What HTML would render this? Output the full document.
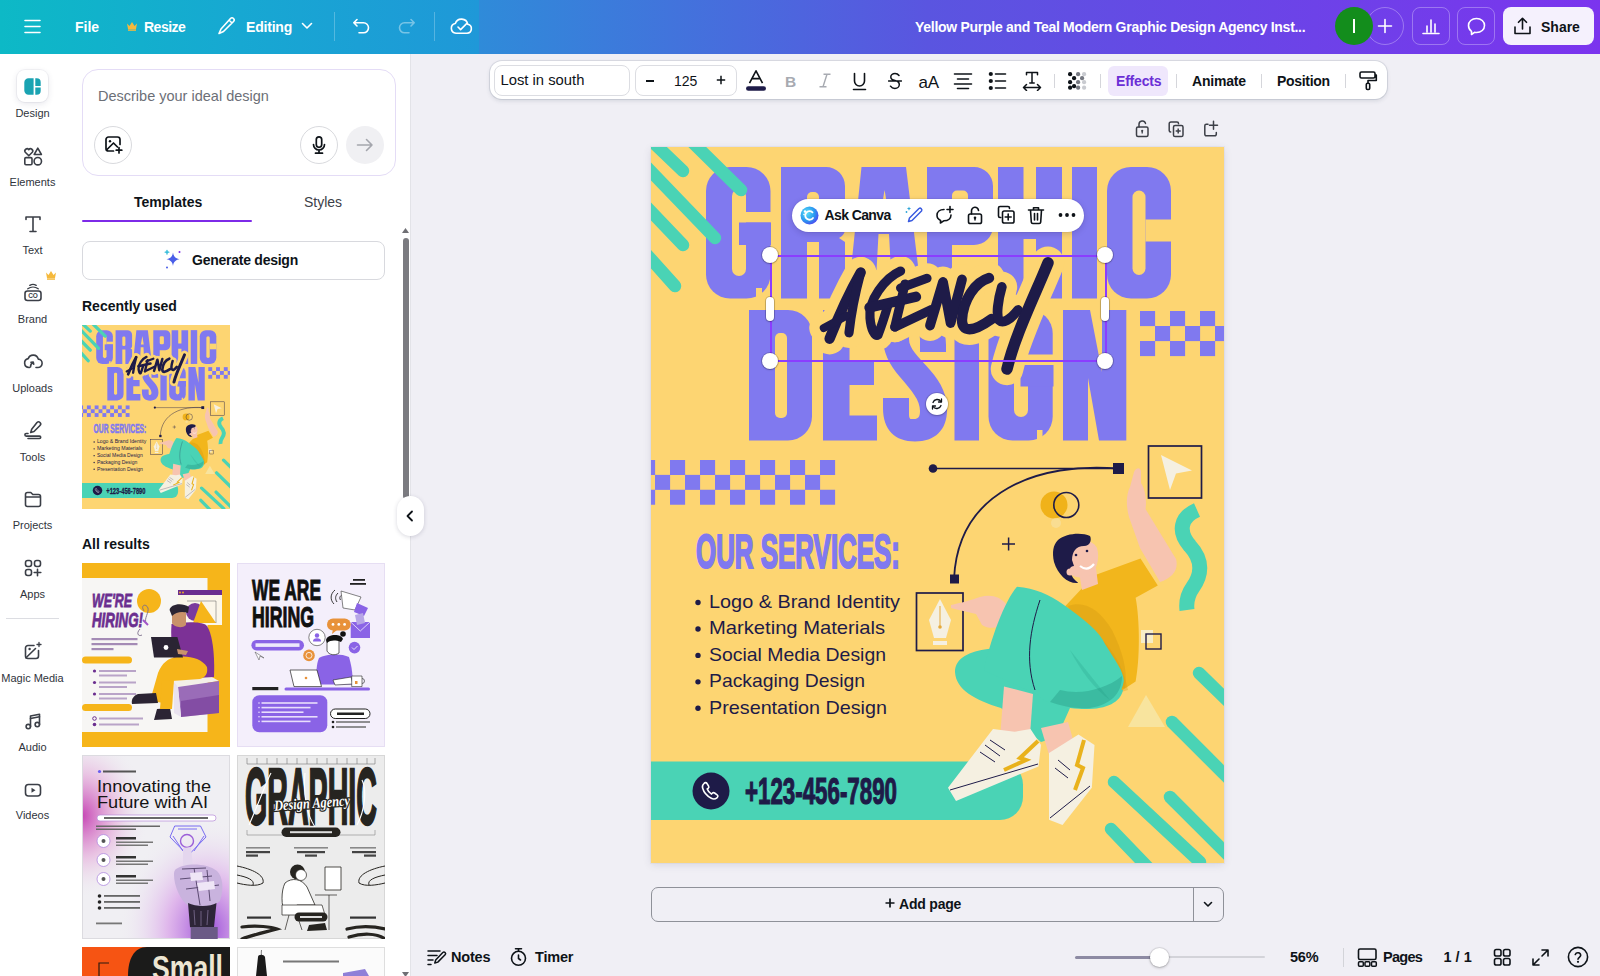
<!DOCTYPE html>
<html><head><meta charset="utf-8">
<style>
*{box-sizing:border-box;margin:0;padding:0}
html,body{width:1600px;height:976px;overflow:hidden;background:#f0eff5;font-family:"Liberation Sans",sans-serif;color:#0e1318}
.a{position:absolute}
.t{position:absolute;line-height:1;white-space:nowrap}
#top{left:0;top:0;width:479px;height:54px;background:linear-gradient(90deg,#0db9c6 0%,#17a8d2 50%,#1f98d8 100%)}
#top2{left:479px;top:0;width:1121px;height:54px;background:linear-gradient(90deg,#2f8bd9 0%,#5a55e0 40%,#7b34ee 100%)}
.wt{color:#fff;font-weight:bold;font-size:14px}
#rail{left:0;top:54px;width:65px;height:922px;background:#fff}
#panel{left:65px;top:54px;width:346px;height:922px;background:#fff;border-right:1px solid #e3e3e8}
.lbl{position:absolute;width:65px;left:0;margin-top:0.6px;text-align:center;font-size:11px;line-height:1;color:#30343c}
.ic{position:absolute;left:22px;width:21px;height:21px}
.thumb{position:absolute;width:148px;height:184px;overflow:hidden}
</style></head><body>
<div id="top" class="a"></div>
<div id="top2" class="a"></div>

<!-- top bar content -->
<svg class="a" style="left:24px;top:19px" width="17" height="15" viewBox="0 0 17 15"><path d="M1 1.5h15M1 7.5h15M1 13.5h15" stroke="#fff" stroke-width="1.6" stroke-linecap="round"/></svg>
<div class="t wt" style="left:75px;top:20px">File</div>
<svg class="a" style="left:126px;top:21px" width="12" height="10" viewBox="0 0 12 10"><path d="M1 2.5l2.5 2.5L6 1l2.5 4L11 2.5 10 8H2z" fill="#f5b93c"/><rect x="2" y="8.3" width="8" height="1.5" fill="#f5b93c"/></svg>
<div class="t wt" style="left:144px;top:20px;letter-spacing:-0.5px">Resize</div>
<svg class="a" style="left:217px;top:16px" width="20" height="20" viewBox="0 0 20 20"><path d="M13.5 2.5a2.1 2.1 0 0 1 3 3L6.5 15.5 2 17.5l2-4.5z M12 4l3 3" fill="none" stroke="#fff" stroke-width="1.6" stroke-linejoin="round"/></svg>
<div class="t wt" style="left:246px;top:20px;letter-spacing:-0.2px">Editing</div>
<svg class="a" style="left:301px;top:22px" width="12" height="8" viewBox="0 0 12 8"><path d="M1.5 1.5l4.5 4.5 4.5-4.5" fill="none" stroke="#fff" stroke-width="1.6" stroke-linecap="round" stroke-linejoin="round"/></svg>
<div class="a" style="left:334px;top:12px;width:1px;height:29px;background:rgba(255,255,255,.25)"></div>
<svg class="a" style="left:352px;top:17px" width="20" height="18" viewBox="0 0 20 18"><path d="M5 2.5L1.8 5.8 5 9M2 5.8h9.5a5 5 0 0 1 0 10H7" fill="none" stroke="#fff" stroke-width="1.6" stroke-linecap="round" stroke-linejoin="round"/></svg>
<svg class="a" style="left:396px;top:17px" width="20" height="18" viewBox="0 0 20 18"><path d="M15 2.5l3.2 3.3L15 9M18 5.8H8.5a5 5 0 0 0 0 10H13" fill="none" stroke="rgba(255,255,255,.4)" stroke-width="1.6" stroke-linecap="round" stroke-linejoin="round"/></svg>
<div class="a" style="left:434px;top:12px;width:1px;height:29px;background:rgba(255,255,255,.25)"></div>
<svg class="a" style="left:450px;top:16px" width="23" height="19" viewBox="0 0 23 19"><path d="M6 17.2h11a4.5 4.5 0 0 0 .8-8.9A6.5 6.5 0 0 0 5.3 7.5 4.9 4.9 0 0 0 6 17.2z" fill="none" stroke="#fff" stroke-width="1.6" stroke-linejoin="round"/><path d="M8 11l2.6 2.6 6-6" fill="none" stroke="#fff" stroke-width="1.6" stroke-linecap="round" stroke-linejoin="round"/></svg>
<div class="t wt" style="left:915px;top:20px;font-size:14px;letter-spacing:-0.28px">Yellow Purple and Teal Modern Graphic Design Agency Inst...</div>
<div class="a" style="left:1366px;top:7px;width:38px;height:38px;border-radius:50%;border:1px solid rgba(255,255,255,.3)"></div>
<svg class="a" style="left:1377px;top:18px" width="16" height="16" viewBox="0 0 16 16"><path d="M8 1.5v13M1.5 8h13" stroke="#fff" stroke-width="1.6" stroke-linecap="round"/></svg>
<div class="a" style="left:1335px;top:7px;width:38px;height:38px;border-radius:50%;background:#138d1c"></div>
<div class="a" style="left:1353px;top:19px;width:2px;height:14px;background:#fff"></div>
<div class="a" style="left:1412px;top:7px;width:38px;height:38px;border-radius:8px;border:1px solid rgba(255,255,255,.3)"></div>
<svg class="a" style="left:1421px;top:16px" width="20" height="20" viewBox="0 0 20 20"><path d="M2 17.5h16M6 16V10M10 16V4M14 16V8" stroke="#fff" stroke-width="1.6" stroke-linecap="round"/></svg>
<div class="a" style="left:1457px;top:7px;width:38px;height:38px;border-radius:8px;border:1px solid rgba(255,255,255,.3)"></div>
<svg class="a" style="left:1466px;top:16px" width="21" height="21" viewBox="0 0 21 21"><path d="M10.5 2.5c4.7 0 8 3 8 7s-3.3 7-8 7c-.7 0-1.4-.1-2-.2L5.5 18.5v-3.2C3.6 14 2.5 12 2.5 9.5c0-4 3.3-7 8-7z" fill="none" stroke="#fff" stroke-width="1.6" stroke-linejoin="round"/></svg>
<div class="a" style="left:1503px;top:7px;width:91px;height:38px;border-radius:8px;background:#f5f1fd"></div>
<svg class="a" style="left:1512px;top:16px" width="21" height="21" viewBox="0 0 21 21"><path d="M10.5 13V2.5M6.5 6.3l4-4 4 4M3 11v6.5h15V11" fill="none" stroke="#0e1318" stroke-width="1.6" stroke-linecap="round" stroke-linejoin="round"/></svg>
<div class="t" style="left:1541px;top:20px;font-size:14px;font-weight:bold;color:#0e1318">Share</div>
<div id="rail" class="a"></div>
<div id="panel" class="a"></div>
<div class="a" style="left:17px;top:70px;width:31px;height:32px;border-radius:8px;background:#fff;box-shadow:0 0 0 1px rgba(60,60,100,.06),0 2px 6px rgba(60,60,100,.12)"></div>
<svg class="a" style="left:24px;top:78px" width="17" height="17" viewBox="0 0 17 17"><path d="M9.6 0.3H4.5A4.2 4.2 0 0 0 .3 4.5v8A4.2 4.2 0 0 0 4.5 16.7H9.6z" fill="#1aa3b2"/><path d="M11.3 .3h1.4a4 4 0 0 1 4 4v3.8H11.3z M11.3 9.4h5.4v3.3a4 4 0 0 1-4 4H11.3z" fill="#1aa3b2"/></svg>
<div class="lbl" style="top:107.4px">Design</div>
<div class="lbl" style="top:176.2px">Elements</div>
<svg class="a" style="left:20.5px;top:143.5px" width="24" height="24" viewBox="0 0 24 24"><path d="M7.8 11.8L4.3 8.3a2.1 2.1 0 0 1 3.5-2.6 2.1 2.1 0 0 1 3.5 2.6z" fill="none" stroke="#3b3f47" stroke-width="1.6" stroke-linecap="round" stroke-linejoin="round"/><path d="M16.8 4.2l3.6 6.3h-7.2z" fill="none" stroke="#3b3f47" stroke-width="1.6" stroke-linecap="round" stroke-linejoin="round"/><rect x="3.8" y="13.6" width="7.2" height="7.2" rx="1.2" fill="none" stroke="#3b3f47" stroke-width="1.6" stroke-linecap="round" stroke-linejoin="round"/><circle cx="16.8" cy="17.2" r="3.7" fill="none" stroke="#3b3f47" stroke-width="1.6" stroke-linecap="round" stroke-linejoin="round"/></svg>
<div class="lbl" style="top:244.7px">Text</div>
<svg class="a" style="left:20.5px;top:211.6px" width="24" height="24" viewBox="0 0 24 24"><path d="M5 7.5V5h14v2.5M12 5v14.5M9 19.5h6" fill="none" stroke="#3b3f47" stroke-width="1.6" stroke-linecap="round" stroke-linejoin="round"/></svg>
<div class="lbl" style="top:313.4px">Brand</div>
<svg class="a" style="left:20.5px;top:280.0px" width="24" height="24" viewBox="0 0 24 24"><rect x="4" y="11" width="16" height="9.5" rx="2.5" fill="none" stroke="#3b3f47" stroke-width="1.6" stroke-linecap="round" stroke-linejoin="round"/><path d="M6.8 8.8c3-2.2 7.4-2.2 10.4 0" fill="none" stroke="#3b3f47" stroke-width="1.4" stroke-linecap="round"/><path d="M8.8 5.3c2-1.2 4.4-1.2 6.4 0" fill="none" stroke="#3b3f47" stroke-width="1.4" stroke-linecap="round"/><text x="12" y="18.2" text-anchor="middle" font-size="6.5" font-weight="bold" fill="#3b3f47" font-family="Liberation Sans">CO</text></svg>
<div class="lbl" style="top:382.5px">Uploads</div>
<svg class="a" style="left:20.5px;top:348.3px" width="24" height="24" viewBox="0 0 24 24"><path d="M8.5 19.5H8a4.5 4.5 0 0 1-.8-8.9 5.3 5.3 0 0 1 10.1.5A4.2 4.2 0 0 1 16.5 19.5h-1.5" fill="none" stroke="#3b3f47" stroke-width="1.6" stroke-linecap="round" stroke-linejoin="round"/><path d="M9.5 19c0-2 1-3.8 2.5-4.5M10 14.3l2.2-.3.5 2.1" fill="none" stroke="#3b3f47" stroke-width="1.6" stroke-linecap="round" stroke-linejoin="round"/></svg>
<div class="lbl" style="top:451.4px">Tools</div>
<svg class="a" style="left:20.5px;top:417.5px" width="24" height="24" viewBox="0 0 24 24"><path d="M16 4.5a2 2 0 0 1 3 3l-6 6-3.3 1 1-3.3z" fill="none" stroke="#3b3f47" stroke-width="1.6" stroke-linecap="round" stroke-linejoin="round"/><path d="M7 15.5H5.2a1.3 1.3 0 0 0 0 2.6h13.3a1.2 1.2 0 0 1 0 2.4H7" fill="none" stroke="#3b3f47" stroke-width="1.6" stroke-linecap="round" stroke-linejoin="round"/></svg>
<div class="lbl" style="top:519.7px">Projects</div>
<svg class="a" style="left:20.5px;top:486.8px" width="24" height="24" viewBox="0 0 24 24"><path d="M4.5 7.5a2 2 0 0 1 2-2h3.3l2 2h5.7a2 2 0 0 1 2 2v8a2 2 0 0 1-2 2h-11a2 2 0 0 1-2-2z M4.5 10h15" fill="none" stroke="#3b3f47" stroke-width="1.6" stroke-linecap="round" stroke-linejoin="round"/></svg>
<div class="lbl" style="top:588.0px">Apps</div>
<svg class="a" style="left:20.5px;top:555.6px" width="24" height="24" viewBox="0 0 24 24"><rect x="4.5" y="4.5" width="6" height="6" rx="2.2" fill="none" stroke="#3b3f47" stroke-width="1.6" stroke-linecap="round" stroke-linejoin="round"/><rect x="13.5" y="4.5" width="6" height="6" rx="2.2" fill="none" stroke="#3b3f47" stroke-width="1.6" stroke-linecap="round" stroke-linejoin="round"/><rect x="4.5" y="13.5" width="6" height="6" rx="2.2" fill="none" stroke="#3b3f47" stroke-width="1.6" stroke-linecap="round" stroke-linejoin="round"/><path d="M16.5 13.2v6.6M13.2 16.5h6.6" fill="none" stroke="#3b3f47" stroke-width="1.6" stroke-linecap="round" stroke-linejoin="round"/></svg>
<div class="a" style="left:6px;top:618px;width:53px;height:1px;background:#dcdde2"></div>
<div class="lbl" style="top:672.7px">Magic Media</div>
<svg class="a" style="left:20.5px;top:639.3px" width="24" height="24" viewBox="0 0 24 24"><path d="M17.5 11.5v5.5a2.5 2.5 0 0 1-2.5 2.5H7a2.5 2.5 0 0 1-2.5-2.5V9A2.5 2.5 0 0 1 7 6.5h6" fill="none" stroke="#3b3f47" stroke-width="1.6" stroke-linecap="round" stroke-linejoin="round"/><path d="M5 18.8L14.5 9.5" fill="none" stroke="#3b3f47" stroke-width="1.6" stroke-linecap="round" stroke-linejoin="round"/><circle cx="8.6" cy="10" r="1.2" fill="#3b3f47"/><path d="M18 3.5v4M16 5.5h4" stroke="#3b3f47" stroke-width="1.3" stroke-linecap="round"/></svg>
<div class="lbl" style="top:741.4px">Audio</div>
<svg class="a" style="left:20.5px;top:709.0px" width="24" height="24" viewBox="0 0 24 24"><path d="M9.5 17.5V7l9-1.8v10.3" fill="none" stroke="#3b3f47" stroke-width="1.6" stroke-linecap="round" stroke-linejoin="round"/><circle cx="7.3" cy="17.6" r="2.2" fill="none" stroke="#3b3f47" stroke-width="1.6" stroke-linecap="round" stroke-linejoin="round"/><circle cx="16.3" cy="15.6" r="2.2" fill="none" stroke="#3b3f47" stroke-width="1.6" stroke-linecap="round" stroke-linejoin="round"/><path d="M9.5 9.5l9-1.8" fill="none" stroke="#3b3f47" stroke-width="1.6" stroke-linecap="round" stroke-linejoin="round"/></svg>
<div class="lbl" style="top:809.7px">Videos</div>
<svg class="a" style="left:20.5px;top:777.7px" width="24" height="24" viewBox="0 0 24 24"><rect x="4.5" y="6.5" width="15" height="11.5" rx="3" fill="none" stroke="#3b3f47" stroke-width="1.6" stroke-linecap="round" stroke-linejoin="round"/><path d="M10.5 9.8v5l4-2.5z" fill="#3b3f47"/></svg>
<svg class="a" style="left:45px;top:270px" width="12" height="10" viewBox="0 0 12 10"><path d="M1 2.5l2.5 2.5L6 1l2.5 4L11 2.5 10 8H2z" fill="#f5b93c"/><rect x="2" y="8.3" width="8" height="1.5" fill="#f5b93c"/></svg>

<!-- panel -->
<div class="a" style="left:82px;top:69px;width:314px;height:107px;border-radius:16px;border:1px solid #e4dcf6;background:#fff"></div>
<div class="t" style="left:98px;top:89px;font-size:14.5px;color:#6c6f77">Describe your ideal design</div>
<div class="a" style="left:94px;top:126px;width:38px;height:38px;border-radius:50%;border:1px solid #d9dade"></div>
<svg class="a" style="left:101px;top:133px" width="24" height="24" viewBox="0 0 24 24"><path d="M19 11.5V6.5A2.5 2.5 0 0 0 16.5 4h-9A2.5 2.5 0 0 0 5 6.5v9A2.5 2.5 0 0 0 7.5 18h5" fill="none" stroke="#0e1318" stroke-width="1.7" stroke-linecap="round"/><path d="M5.5 17l7-7 4 4" fill="none" stroke="#0e1318" stroke-width="1.7" stroke-linecap="round" stroke-linejoin="round"/><circle cx="9" cy="8.2" r="1.2" fill="#0e1318"/><path d="M18 14.5v5.5M15.2 17.2h5.6" stroke="#0e1318" stroke-width="1.7" stroke-linecap="round"/></svg>
<div class="a" style="left:300px;top:126px;width:38px;height:38px;border-radius:50%;border:1px solid #d9dade"></div>
<svg class="a" style="left:307px;top:133px" width="24" height="24" viewBox="0 0 24 24"><rect x="9.3" y="3.8" width="5.4" height="10.5" rx="2.7" fill="none" stroke="#0e1318" stroke-width="1.7"/><path d="M6.5 11.5a5.5 5.5 0 0 0 11 0M12 17v3M8.5 20.2h7" fill="none" stroke="#0e1318" stroke-width="1.7" stroke-linecap="round"/></svg>
<div class="a" style="left:346px;top:126px;width:38px;height:38px;border-radius:50%;background:#f0f0f3"></div>
<svg class="a" style="left:353px;top:133px" width="24" height="24" viewBox="0 0 24 24"><path d="M4.5 12h14.5M13.5 6.5L19 12l-5.5 5.5" fill="none" stroke="#a4a6ad" stroke-width="1.6" stroke-linecap="round" stroke-linejoin="round"/></svg>
<div class="t" style="left:134px;top:195px;font-size:14px;font-weight:bold;color:#0e1318">Templates</div>
<div class="t" style="left:304px;top:195px;font-size:14px;color:#3c4048">Styles</div>
<div class="a" style="left:82px;top:219.5px;width:170px;height:2.5px;background:#7d2ae8;border-radius:2px"></div>
<div class="a" style="left:82px;top:241px;width:303px;height:39px;border-radius:8px;border:1px solid #d8d9de;background:#fff"></div>
<svg class="a" style="left:162px;top:249px" width="22" height="22" viewBox="0 0 22 22"><path d="M11 3.5c.6 3.9 2.3 5.9 6.5 6.7-4.2.8-5.9 2.8-6.5 6.7-.6-3.9-2.3-5.9-6.5-6.7 4.2-.8 5.9-2.8 6.5-6.7z" fill="#4a5ee8"/><path d="M5 1.5v3.5M3.2 3.2h3.6" stroke="#28b8d8" stroke-width="1.3" stroke-linecap="round"/><circle cx="17.5" cy="3" r="1" fill="#7d2ae8"/><circle cx="5" cy="18.5" r="1" fill="#4a5ee8"/></svg>
<div class="t" style="left:192px;top:253px;font-size:14px;font-weight:bold;color:#0e1318;letter-spacing:-0.25px">Generate design</div>
<div class="t" style="left:82px;top:298.5px;font-size:14px;font-weight:bold;color:#0e1318">Recently used</div>
<div class="t" style="left:82px;top:537px;font-size:14px;font-weight:bold;color:#0e1318">All results</div>
<!-- scrollbar -->
<svg class="a" style="left:401px;top:227px" width="9" height="7" viewBox="0 0 9 7"><path d="M4.5 1L8 6H1z" fill="#6f6f74"/></svg>
<div class="a" style="left:402.5px;top:238px;width:6px;height:261px;border-radius:3px;background:#7b7b80"></div>
<svg class="a" style="left:401px;top:971px" width="9" height="7" viewBox="0 0 9 7"><path d="M4.5 6L8 1H1z" fill="#6f6f74"/></svg>
<div class="a" style="left:397px;top:496px;width:27px;height:40px;border-radius:14px 14px 14px 14px;background:#fff;box-shadow:0 1px 4px rgba(40,40,70,.18)"></div>
<svg class="a" style="left:404px;top:509px" width="12" height="14" viewBox="0 0 12 14"><path d="M8 2.5L3.5 7 8 11.5" fill="none" stroke="#0e1318" stroke-width="1.8" stroke-linecap="round" stroke-linejoin="round"/></svg>
<svg class="a" style="left:82px;top:325px" width="148" height="184" viewBox="651 147 573 716" preserveAspectRatio="none"><use href="#poster"/></svg>
<svg class="a" style="left:82px;top:563px" width="148" height="184" viewBox="0 0 148 184"><rect width="148" height="184" fill="#f6b51a"/><rect x="0" y="15" width="125.5" height="154" fill="#f7f6f4"/><text x="10" y="43.5" font-family="Liberation Sans" font-weight="bold" font-style="italic" font-size="19" fill="#6b2e8f" stroke="#6b2e8f" stroke-width=".8" textLength="40" lengthAdjust="spacingAndGlyphs">WE'RE</text><text x="10" y="64" font-family="Liberation Sans" font-weight="bold" font-style="italic" font-size="20" fill="#6b2e8f" stroke="#6b2e8f" stroke-width=".8" textLength="51" lengthAdjust="spacingAndGlyphs">HIRING!</text><circle cx="67" cy="38" r="12" fill="#f6b51a"/><rect x="9.5" y="75" width="46" height="2.2" fill="#a48bb5"/><rect x="9.5" y="80" width="46" height="2.2" fill="#a48bb5"/><rect x="9.5" y="85" width="22" height="2.2" fill="#a48bb5"/><rect x="0" y="93.5" width="50" height="7" rx="3.5" fill="#f6b51a"/><circle cx="12.5" cy="108" r="1.6" fill="#6b2e8f"/><rect x="17" y="107" width="37" height="2" fill="#b9a4c8"/><rect x="17" y="111.5" width="28" height="2" fill="#b9a4c8"/><circle cx="12.5" cy="119.5" r="1.6" fill="#6b2e8f"/><rect x="17" y="118.5" width="37" height="2" fill="#b9a4c8"/><rect x="17" y="123.0" width="28" height="2" fill="#b9a4c8"/><circle cx="12.5" cy="131" r="1.6" fill="#6b2e8f"/><rect x="17" y="130" width="37" height="2" fill="#b9a4c8"/><rect x="17" y="134.5" width="28" height="2" fill="#b9a4c8"/><rect x="0" y="141" width="50" height="7" rx="3.5" fill="#f6b51a"/><circle cx="12.5" cy="155.5" r="1.8" fill="none" stroke="#6b2e8f"/><rect x="17" y="154.5" width="44" height="2" fill="#b9a4c8"/><circle cx="12.5" cy="161.5" r="1.8" fill="#6b2e8f"/><rect x="17" y="160.5" width="40" height="2" fill="#b9a4c8"/><rect x="96" y="27" width="44" height="5" fill="#6b2e8f"/><rect x="96" y="32" width="44" height="30" fill="#fbf6ea"/><circle cx="98" cy="29.5" r=".9" fill="#f6b51a"/><circle cx="101" cy="29.5" r=".9" fill="#f6b51a"/><circle cx="113" cy="49" r="9" fill="#7a3a9e"/><path d="M119 38L134 60H111Z" fill="#f6b51a"/><path d="M105 38H134V60" fill="none" stroke="#333" stroke-width=".4"/><path d="M91.5 118L128 113L137 118L96 124Z" fill="#f3efe8"/><path d="M96 124L137 118L137 150L99 154Z" fill="#9a6cb8"/><path d="M91.5 118L96 124L99 154L92 150Z" fill="#e9e2ee"/><path d="M99 138L137 132V150L99 154Z" fill="#6b2e8f" opacity=".5"/><path d="M89.5 61C100 59 118 58 124 62C130 68 133 90 132 114L96 116C92 100 88 80 89.5 61Z" fill="#7c3196"/><path d="M95 94C105 92 120 95 125 104C126 110 124 114 118 116L90 118L82 140L68 138L76 110C80 100 86 95 95 94Z" fill="#f6b51a"/><path d="M56 131L74 130L76 140L50 141C49 137 51 133 56 131Z" fill="#2b2433"/><path d="M75 146L88 145L90 156L72 157Z" fill="#2b2433"/><path d="M80 118L92 117L90 146L78 146Z" fill="#f6b51a"/><path d="M69 74H95.4L101 94.4H72Z" fill="#2a2433"/><circle cx="84" cy="84.5" r="2.4" fill="#fff"/><path d="M95 86L106 88L104 92L96 91Z" fill="#c9926a"/><path d="M90 50C92 46 100 45 104 50L104 62C100 66 92 64 90 60Z" fill="#c9926a"/><path d="M87.6 47C88 41 100 39 107 44L106 50C100 48 94 49 90 53Z" fill="#2a2433"/><path d="M62 48C58 42 64 40 66 45C67 50 62 55 64 60M58 66C54 70 56 74 60 72" fill="none" stroke="#7c6d8a" stroke-width=".9"/><path d="M61 57L66 62" stroke="#a255c8" stroke-width="2"/></svg>
<svg class="a" style="left:237px;top:563px" width="148" height="184" viewBox="0 0 148 184"><rect width="148" height="184" fill="#f4effb"/><rect x=".5" y=".5" width="147" height="183" fill="none" stroke="#e6def3"/><text x="15" y="36.5" font-family="Liberation Sans" font-weight="bold" font-size="30" fill="#101010" stroke="#101010" stroke-width="1" textLength="69" lengthAdjust="spacingAndGlyphs">WE ARE</text><text x="15" y="63.5" font-family="Liberation Sans" font-weight="bold" font-size="30" fill="#101010" stroke="#101010" stroke-width="1" textLength="62" lengthAdjust="spacingAndGlyphs">HIRING</text><rect x="116" y="16" width="12" height="1.8" fill="#222"/><rect x="113" y="20" width="16" height="1.8" fill="#222"/><path d="M104 28L124 34L118 47L106 45Z" fill="#fff" stroke="#333" stroke-width=".6"/><path d="M120 40L131 45L127 53L117 49Z" fill="#8a63e6"/><path d="M113.7 59H133V75H113.7Z" fill="#8a63e6"/><path d="M113.7 59L123.3 68L133 59" fill="none" stroke="#fff" stroke-width=".7"/><path d="M118 52L126 50L128 60L120 62Z" fill="#b7a6e6"/><path d="M98 27C93 31 93 37 97 41M101 30C98 33 98 36 100 39M104 32.5C102.5 34 102.5 35.5 103.5 37" fill="none" stroke="#222" stroke-width=".9"/><rect x="90" y="55.4" width="23.7" height="12" rx="6" fill="#e8923a"/><path d="M96 66L95 71L100 67Z" fill="#e8923a"/><circle cx="96" cy="61.4" r="1.4" fill="#fff"/><circle cx="101.8" cy="61.4" r="1.4" fill="#fff"/><circle cx="107.6" cy="61.4" r="1.4" fill="#fff"/><circle cx="80" cy="74.5" r="8.2" fill="#fff" stroke="#333" stroke-width=".6"/><circle cx="80" cy="72.5" r="2.2" fill="#8a63e6"/><path d="M76 78.5a4 3.2 0 0 1 8 0Z" fill="#8a63e6"/><circle cx="117.5" cy="84.6" r="5.8" fill="#8a63e6"/><path d="M115 84.5l2 2 3.5-3.5" fill="none" stroke="#fff" stroke-width=".8"/><circle cx="72" cy="92.4" r="5.8" fill="#e8923a"/><circle cx="72" cy="92.4" r="3" fill="none" stroke="#fff" stroke-width=".8"/><rect x="14.4" y="77" width="52.6" height="10.5" rx="5.2" fill="#8a63e6"/><rect x="18.5" y="80.3" width="44" height="3.6" fill="#fff" opacity=".85"/><path d="M18 89L22 97L23 93L27 95Z" fill="#fff" stroke="#444" stroke-width=".5"/><path d="M82 95C88 91 104 90 112 94C115 104 116 114 115.6 121.6H80C79 112 79 102 82 95Z" fill="#8a63e6"/><path d="M90 78C90 73 100 72 102 78L102 90C98 93 92 92 90 88Z" fill="#fff" stroke="#222" stroke-width=".7"/><path d="M89 77C90 71 104 70 106 76L104 79C98 77 94 77 90 80Z" fill="#111"/><circle cx="106" cy="71" r="2.8" fill="#111"/><path d="M53 107H80L84.5 123.6H57Z" fill="#fff" stroke="#222" stroke-width=".7"/><circle cx="69" cy="115" r="1.3" fill="#e8923a"/><path d="M96 117L114 114L116 121L98 122Z" fill="#fff" stroke="#222" stroke-width=".6"/><path d="M114.7 113H125V123.6H114.7Z" fill="#fff" stroke="#222" stroke-width=".6"/><path d="M125 115.5a2.5 2.5 0 0 1 0 5" fill="none" stroke="#222" stroke-width=".6"/><rect x="118" y="118" width="2.5" height="3" fill="#e8923a"/><rect x="15.3" y="124" width="26" height="3.2" fill="#222"/><rect x="47.5" y="124.4" width="85.5" height="3" rx="1.5" fill="#8a63e6"/><rect x="15.3" y="132.3" width="75" height="37" rx="7" fill="#8a63e6"/><circle cx="22" cy="140.0" r=".8" fill="#e9defc"/><rect x="24.5" y="139.2" width="56" height="1.6" fill="#e9defc"/><circle cx="22" cy="144.6" r=".8" fill="#e9defc"/><rect x="24.5" y="143.79999999999998" width="49" height="1.6" fill="#e9defc"/><circle cx="22" cy="149.2" r=".8" fill="#e9defc"/><rect x="24.5" y="148.39999999999998" width="42" height="1.6" fill="#e9defc"/><circle cx="22" cy="153.8" r=".8" fill="#e9defc"/><rect x="24.5" y="153.0" width="56" height="1.6" fill="#e9defc"/><circle cx="22" cy="158.4" r=".8" fill="#e9defc"/><rect x="24.5" y="157.6" width="49" height="1.6" fill="#e9defc"/><rect x="93.5" y="146" width="39.5" height="9.5" rx="4.7" fill="#fff" stroke="#222" stroke-width="1"/><rect x="100" y="149.5" width="27" height="2.5" fill="#222"/><circle cx="96" cy="159" r="1.3" fill="#222"/><rect x="99" y="158.2" width="34" height="1.6" fill="#777"/><circle cx="96" cy="164" r="1.3" fill="#222"/><rect x="99" y="163.2" width="30" height="1.6" fill="#777"/></svg>
<svg class="a" style="left:82px;top:755px" width="148" height="184" viewBox="0 0 148 184"><defs><radialGradient id="cg1" cx="0" cy=".33" r=".45"><stop offset="0" stop-color="#c646b4"/><stop offset=".5" stop-color="#e6b0dc" stop-opacity=".7"/><stop offset="1" stop-color="#efeef3" stop-opacity="0"/></radialGradient><radialGradient id="cg2" cx=".85" cy=".95" r=".6"><stop offset="0" stop-color="#9a4fd8"/><stop offset=".45" stop-color="#d89ee8" stop-opacity=".7"/><stop offset="1" stop-color="#efeef3" stop-opacity="0"/></radialGradient></defs><rect width="148" height="184" fill="#f0eff3"/><rect width="148" height="184" fill="url(#cg1)"/><rect width="148" height="184" fill="url(#cg2)"/><rect x=".5" y=".5" width="147" height="183" fill="none" stroke="#dcdbe0"/><circle cx="17.5" cy="16.5" r="1.6" fill="#6a5cf0"/><rect x="21" y="15.5" width="33" height="2" fill="#555"/><text x="15" y="36.5" font-family="Liberation Sans" font-size="16" fill="#141414" textLength="114" lengthAdjust="spacingAndGlyphs">Innovating the</text><text x="15" y="53" font-family="Liberation Sans" font-size="16" fill="#141414" textLength="111" lengthAdjust="spacingAndGlyphs">Future with AI</text><rect x="15" y="60" width="119" height="6" rx="3" fill="#fff" stroke="#b68ad8" stroke-width=".7"/><rect x="22" y="62.2" width="104" height="1.6" fill="#444"/><rect x="14" y="70.5" width="64" height="1.5" fill="#666"/><rect x="14" y="73.5" width="40" height="1.5" fill="#666"/><circle cx="21.5" cy="86" r="6.5" fill="#fff" stroke="#b08ae0" stroke-width=".8"/><circle cx="21.5" cy="86" r="2" fill="#555"/><rect x="34" y="82" width="20" height="2.5" fill="#333"/><rect x="34" y="86.5" width="37" height="1.5" fill="#777"/><rect x="34" y="89.5" width="32" height="1.5" fill="#777"/><circle cx="21.5" cy="105" r="6.5" fill="#fff" stroke="#b08ae0" stroke-width=".8"/><circle cx="21.5" cy="105" r="2" fill="#555"/><rect x="34" y="101" width="20" height="2.5" fill="#333"/><rect x="34" y="105.5" width="37" height="1.5" fill="#777"/><rect x="34" y="108.5" width="32" height="1.5" fill="#777"/><circle cx="21.5" cy="124" r="6.5" fill="#fff" stroke="#b08ae0" stroke-width=".8"/><circle cx="21.5" cy="124" r="2" fill="#555"/><rect x="34" y="120" width="20" height="2.5" fill="#333"/><rect x="34" y="124.5" width="37" height="1.5" fill="#777"/><rect x="34" y="127.5" width="32" height="1.5" fill="#777"/><circle cx="17.5" cy="141" r="1.8" fill="#222"/><rect x="22" y="140" width="36" height="1.8" fill="#666"/><circle cx="17.5" cy="147" r="1.8" fill="#222"/><rect x="22" y="146" width="36" height="1.8" fill="#666"/><circle cx="17.5" cy="153" r="1.8" fill="#222"/><rect x="22" y="152" width="36" height="1.8" fill="#666"/><rect x="14" y="167.5" width="26" height="1.8" fill="#777"/><path d="M92.7 71H118.5L124 82L106 100.6L88 82Z" fill="none" stroke="#6a5cf0" stroke-width=".9"/><path d="M96 74H115M91 81L101 96M122 81L112 96" stroke="#7b6cf2" stroke-width="1"/><circle cx="105" cy="86" r="6.5" fill="none" stroke="#9b5fd8" stroke-width="1.4"/><path d="M101 93L109 92L111 112L101 113Z" fill="#e4d6ee"/><path d="M96 113C104 108 125 108 135 116C141 122 142 134 138 146C132 152 118 154 108 152C98 146 92 130 92 120C92 116 93 114 96 113Z" fill="#c9b3de"/><path d="M100 114L124 113M98 124L130 121M104 134L137 130M112 113L118 150M125 115L128 146" stroke="#5c4b72" stroke-width="1"/><path d="M108 118L120 117L121 125L109 126Z" fill="#efe6f6"/><path d="M115 128L132 126L133 134L117 136Z" fill="#efe6f6"/><path d="M106 148C114 152 128 152 134.5 148L132 172C124 176 114 176 108 172Z" fill="#2e2538"/><path d="M112 155L113 170M119 156L119 171M126 155L125 170" stroke="#8a7aa0" stroke-width=".7"/><path d="M108.7 172H135.7V184H108.7Z" fill="#6b5a86"/></svg>
<svg class="a" style="left:237px;top:755px" width="148" height="184" viewBox="0 0 148 184"><rect width="148" height="184" fill="#ececec"/><rect x=".5" y=".5" width="147" height="183" fill="none" stroke="#d7d7d7"/><path d="M10 3V9M20 3V9M30 3V9M40 3V9M50 3V9M60 3V9M70 3V9M80 3V9M90 3V9M100 3V9M110 3V9M120 3V9M130 3V9M138 3V9M10 9H138" stroke="#777" stroke-width=".6"/><text x="8" y="69" font-family="Liberation Sans" font-weight="bold" font-size="80" fill="#262420" stroke="#262420" stroke-width="2.4" textLength="132" lengthAdjust="spacingAndGlyphs">GRAPHIC</text><path d="M12 70C25 40 30 25 34 18M125 25C130 35 128 55 120 70M68 18C66 40 70 60 78 72" fill="none" stroke="#fff" stroke-width="1.1"/><text x="37" y="53" font-family="Liberation Serif" font-style="italic" font-weight="bold" font-size="15" fill="#fff" stroke="#262420" stroke-width="2.6" paint-order="stroke" textLength="76" lengthAdjust="spacingAndGlyphs" transform="rotate(-4 75 48)">Design Agency</text><path d="M10 75V80M138 75V80M10 80H138" stroke="#888" stroke-width=".6"/><rect x="44.5" y="72.5" width="59" height="9.5" rx="4.7" fill="#262420"/><rect x="53" y="76.2" width="42" height="2" fill="#ddd"/><rect x="9" y="92" width="24" height="1.6" fill="#888"/><rect x="9" y="96" width="24" height="2.2" fill="#444"/><rect x="9" y="99.5" width="12" height="2.2" fill="#444"/><rect x="57" y="92" width="34" height="1.6" fill="#888"/><rect x="60" y="96" width="28" height="2.2" fill="#444"/><rect x="68" y="99.5" width="12" height="2.2" fill="#444"/><rect x="113" y="92" width="26" height="1.6" fill="#888"/><rect x="115" y="96" width="24" height="2.2" fill="#444"/><rect x="127" y="99.5" width="12" height="2.2" fill="#444"/><path d="M0 111C15 114 28 120 26 128C20 132 8 130 0 128M0 120C10 122 18 125 16 130M148 111C133 114 120 120 122 128C128 132 140 130 148 128M148 120C138 122 130 125 132 130" fill="none" stroke="#262420" stroke-width="1"/><circle cx="60.5" cy="117" r="7.5" fill="#262420"/><circle cx="64" cy="120" r="5.5" fill="#fff" stroke="#262420" stroke-width=".7"/><path d="M48 128C55 122 65 124 70 132L78 150H60L48 160C44 150 44 136 48 128Z" fill="#fff" stroke="#262420" stroke-width=".8"/><path d="M45 150H85L88 160H45Z" fill="#fff" stroke="#262420" stroke-width=".7"/><path d="M88 112H104V135H88Z" fill="#fff" stroke="#262420" stroke-width=".8"/><path d="M78 140H100M92 140V175" fill="none" stroke="#262420" stroke-width=".7"/><path d="M52 160L48 175M60 160L65 175" stroke="#262420" stroke-width=".7"/><rect x="10" y="161.5" width="24" height="2.2" fill="#333"/><rect x="113" y="161.5" width="26" height="2.2" fill="#333"/><rect x="57.5" y="157.5" width="33" height="9" rx="4.5" fill="#262420"/><rect x="63" y="161" width="22" height="2" fill="#ddd"/><path d="M72 170L88 168L90 175L70 176Z" fill="#262420"/><path d="M5 172C20 170 35 172 40 174C25 178 15 180 5 184M110 174C125 170 140 172 148 174M112 182C125 178 140 178 148 184" fill="none" stroke="#262420" stroke-width="3.2" stroke-linecap="round"/></svg>
<svg class="a" style="left:82px;top:947px" width="148" height="29" viewBox="0 0 148 29"><rect width="148" height="29" fill="#f65413"/><path d="M65 0H148V29H46C46 12 52 0 65 0Z" fill="#1b1b1a"/><text x="70" y="33" font-family="Liberation Sans" font-weight="bold" font-size="35" fill="#ede6d2" textLength="71" lengthAdjust="spacingAndGlyphs">Small</text><path d="M17 29V16H27" fill="none" stroke="#2b1b10" stroke-width="1.2"/></svg>
<svg class="a" style="left:237px;top:947px" width="148" height="29" viewBox="0 0 148 29"><rect width="148" height="29" fill="#fbfbfb"/><rect x=".5" y=".5" width="147" height="29" fill="none" stroke="#dedede"/><path d="M21 10C21 7 27 7 28 10L30 29H19Z" fill="#1a1a1a"/><path d="M24.5 3C24 6 24.5 8 24.5 9" stroke="#222" stroke-width=".6" fill="none"/><rect x="46" y="13.5" width="56" height="2" fill="#777"/><path d="M106 26L128 22L132 29H106Z" fill="#8f80d8"/></svg>
<div class="a" style="left:651px;top:147px;width:573px;height:716px;box-shadow:0 0 0 1px rgba(60,60,90,.04),0 2px 8px rgba(60,60,90,.13)"></div>
<svg class="a" style="left:651px;top:147px" width="573" height="716" viewBox="651 147 573 716">
<g id="poster">
<rect x="651" y="147" width="573" height="716" fill="#fdd572"/>
<rect x="706" y="167" width="64.5" height="131.5" rx="24" fill="#8079ef"/>
<rect x="732" y="189" width="14" height="87" rx="7" fill="#fdd572"/>
<rect x="746" y="212" width="26" height="10.5" fill="#fdd572"/>
<rect x="739" y="222.5" width="32" height="22.5" fill="#8079ef"/>
<rect x="756" y="288" width="6" height="11" fill="#fdd572"/>
<path d="M781 167H826a19 19 0 0 1 19 19V229a10 10 0 0 1-6 9l6 4V298.5H819V242H807V298.5H781Z" fill="#8079ef"/>
<rect x="807" y="192" width="12" height="37" rx="5" fill="#fdd572"/>
<path d="M861.5 167H906L922 298.5H892.5L889 234H878.5L875 298.5H848Z" fill="#8079ef"/>
<path d="M884.6 190L890 223H879Z" fill="#fdd572"/>
<path d="M927 167H974a19 19 0 0 1 19 19V226a19 19 0 0 1-19 19H952V298.5H927Z" fill="#8079ef"/>
<rect x="952" y="190.5" width="16" height="31.5" rx="5" fill="#fdd572"/>
<path d="M998 167H1023.5V219H1036V167H1062V298.5H1036V239H1023.5V298.5H998Z" fill="#8079ef"/>
<rect x="1072" y="167" width="25" height="131.5" fill="#8079ef"/>
<rect x="1107" y="167" width="64" height="131.5" rx="24" fill="#8079ef"/>
<rect x="1132.5" y="190.5" width="13.0" height="84.5" rx="6.5" fill="#fdd572"/>
<rect x="1145.5" y="219.5" width="26" height="22" fill="#fdd572"/>
<path d="M749 310H788a24 24 0 0 1 24 24V416.5a24 24 0 0 1-24 24H749Z" fill="#8079ef"/>
<rect x="775" y="333" width="12" height="85" rx="5" fill="#fdd572"/>
<path d="M823 310H877V333H849.5V361H874V385H849.5V415.5H877V440.5H823Z" fill="#8079ef"/>
<path d="M915 309C935 309 946 322 946 345V352H920V340C920 334 918 332 915 332C912 332 909 334 909 339C909 349 918 356 930 370C942 384 947 395 947 410C947 430 935 441.5 915 441.5C895 441.5 883 430 883 408V398H909V414C909 420 911 419 914 419C918 419 920 417 920 411C920 400 912 391 900 377C889 364 883 352 883 338C883 320 896 309 915 309Z" fill="#8079ef"/>
<rect x="954.5" y="310" width="24.5" height="130.5" fill="#8079ef"/>
<rect x="988.5" y="309.5" width="64.20000000000005" height="131.0" rx="24" fill="#8079ef"/>
<rect x="1014" y="332" width="14" height="85" rx="7" fill="#fdd572"/>
<rect x="1028" y="354.5" width="26" height="10.5" fill="#fdd572"/>
<rect x="1020.5" y="365" width="33" height="21.5" fill="#8079ef"/>
<rect x="1037" y="430" width="5.5" height="11" fill="#fdd572"/>
<path d="M1063 310H1090L1102 372V310H1126.3V440.5H1099L1088 378V440.5H1063Z" fill="#8079ef"/>
<rect x="1140" y="311" width="15.1" height="15.1" fill="#8079ef"/>
<rect x="1140" y="341" width="15.1" height="15.1" fill="#8079ef"/>
<rect x="1155" y="326" width="15.1" height="15.1" fill="#8079ef"/>
<rect x="1170" y="311" width="15.1" height="15.1" fill="#8079ef"/>
<rect x="1170" y="341" width="15.1" height="15.1" fill="#8079ef"/>
<rect x="1185" y="326" width="15.1" height="15.1" fill="#8079ef"/>
<rect x="1200" y="311" width="15.1" height="15.1" fill="#8079ef"/>
<rect x="1200" y="341" width="15.1" height="15.1" fill="#8079ef"/>
<rect x="1215" y="326" width="15.1" height="15.1" fill="#8079ef"/>
<rect x="640" y="460.00" width="15.1" height="15" fill="#8079ef"/>
<rect x="640" y="489.74" width="15.1" height="15" fill="#8079ef"/>
<rect x="655" y="474.87" width="15.1" height="15" fill="#8079ef"/>
<rect x="670" y="460.00" width="15.1" height="15" fill="#8079ef"/>
<rect x="670" y="489.74" width="15.1" height="15" fill="#8079ef"/>
<rect x="685" y="474.87" width="15.1" height="15" fill="#8079ef"/>
<rect x="700" y="460.00" width="15.1" height="15" fill="#8079ef"/>
<rect x="700" y="489.74" width="15.1" height="15" fill="#8079ef"/>
<rect x="715" y="474.87" width="15.1" height="15" fill="#8079ef"/>
<rect x="730" y="460.00" width="15.1" height="15" fill="#8079ef"/>
<rect x="730" y="489.74" width="15.1" height="15" fill="#8079ef"/>
<rect x="745" y="474.87" width="15.1" height="15" fill="#8079ef"/>
<rect x="760" y="460.00" width="15.1" height="15" fill="#8079ef"/>
<rect x="760" y="489.74" width="15.1" height="15" fill="#8079ef"/>
<rect x="775" y="474.87" width="15.1" height="15" fill="#8079ef"/>
<rect x="790" y="460.00" width="15.1" height="15" fill="#8079ef"/>
<rect x="790" y="489.74" width="15.1" height="15" fill="#8079ef"/>
<rect x="805" y="474.87" width="15.1" height="15" fill="#8079ef"/>
<rect x="820" y="460.00" width="15.1" height="15" fill="#8079ef"/>
<rect x="820" y="489.74" width="15.1" height="15" fill="#8079ef"/>
<line x1="640" y1="130" x2="683" y2="171" stroke="#4ad3b5" stroke-width="12.5" stroke-linecap="round"/>
<line x1="680" y1="130" x2="741" y2="190" stroke="#4ad3b5" stroke-width="12.5" stroke-linecap="round"/>
<line x1="640" y1="160" x2="715" y2="238" stroke="#4ad3b5" stroke-width="12.5" stroke-linecap="round"/>
<line x1="640" y1="200" x2="683" y2="245" stroke="#4ad3b5" stroke-width="12.5" stroke-linecap="round"/>
<line x1="640" y1="247" x2="675" y2="286" stroke="#4ad3b5" stroke-width="12.5" stroke-linecap="round"/>
<line x1="1199" y1="673" x2="1240" y2="713" stroke="#4ad3b5" stroke-width="12.5" stroke-linecap="round"/>
<line x1="1172" y1="722" x2="1240" y2="790" stroke="#4ad3b5" stroke-width="12.5" stroke-linecap="round"/>
<line x1="1114" y1="782" x2="1200" y2="862" stroke="#4ad3b5" stroke-width="12.5" stroke-linecap="round"/>
<line x1="1170" y1="797" x2="1240" y2="867" stroke="#4ad3b5" stroke-width="12.5" stroke-linecap="round"/>
<line x1="1111" y1="829" x2="1160" y2="880" stroke="#4ad3b5" stroke-width="12.5" stroke-linecap="round"/>
<path d="M829.6 338.7Q845 300 860.7 272.5" fill="none" stroke="#fdd572" stroke-width="31.35" stroke-linecap="round" stroke-linejoin="round"/><path d="M860.7 272.5Q852 305 849 332.8" fill="none" stroke="#fdd572" stroke-width="30.2" stroke-linecap="round" stroke-linejoin="round"/><path d="M823.8 328L846 316" fill="none" stroke="#fdd572" stroke-width="29.049999999999997" stroke-linecap="round" stroke-linejoin="round"/><path d="M900.6 271C885 278 868 300 870 318C871 330 875 337 878 335C882 325 885 315 888 305" fill="none" stroke="#fdd572" stroke-width="30.2" stroke-linecap="round" stroke-linejoin="round"/><path d="M869.5 307.5L916 296.8" fill="none" stroke="#fdd572" stroke-width="31.35" stroke-linecap="round" stroke-linejoin="round"/><path d="M900.6 288L927 278.3" fill="none" stroke="#fdd572" stroke-width="30.2" stroke-linecap="round" stroke-linejoin="round"/><path d="M905 284L894.8 327" fill="none" stroke="#fdd572" stroke-width="30.2" stroke-linecap="round" stroke-linejoin="round"/><path d="M894.8 327L931.7 309.5" fill="none" stroke="#fdd572" stroke-width="30.2" stroke-linecap="round" stroke-linejoin="round"/><path d="M930 325.5L943 282L950.6 323L962 279.4" fill="none" stroke="#fdd572" stroke-width="30.775" stroke-linecap="round" stroke-linejoin="round"/><path d="M989 278C975 282 963 300 962 320C962 332 972 333 991.6 319" fill="none" stroke="#fdd572" stroke-width="31.35" stroke-linecap="round" stroke-linejoin="round"/><path d="M1001.8 287C998 300 996 315 999 320C1003 324 1010 320 1018 310" fill="none" stroke="#fdd572" stroke-width="30.775" stroke-linecap="round" stroke-linejoin="round"/><path d="M1048 262.8C1035 295 1015 335 1007 369" fill="none" stroke="#fdd572" stroke-width="32.5" stroke-linecap="round" stroke-linejoin="round"/>
<path d="M829.6 338.7Q845 300 860.7 272.5" fill="none" stroke="#1e1b48" stroke-width="10.35" stroke-linecap="round" stroke-linejoin="round"/><path d="M860.7 272.5Q852 305 849 332.8" fill="none" stroke="#1e1b48" stroke-width="9.2" stroke-linecap="round" stroke-linejoin="round"/><path d="M823.8 328L846 316" fill="none" stroke="#1e1b48" stroke-width="8.049999999999999" stroke-linecap="round" stroke-linejoin="round"/><path d="M900.6 271C885 278 868 300 870 318C871 330 875 337 878 335C882 325 885 315 888 305" fill="none" stroke="#1e1b48" stroke-width="9.2" stroke-linecap="round" stroke-linejoin="round"/><path d="M869.5 307.5L916 296.8" fill="none" stroke="#1e1b48" stroke-width="10.35" stroke-linecap="round" stroke-linejoin="round"/><path d="M900.6 288L927 278.3" fill="none" stroke="#1e1b48" stroke-width="9.2" stroke-linecap="round" stroke-linejoin="round"/><path d="M905 284L894.8 327" fill="none" stroke="#1e1b48" stroke-width="9.2" stroke-linecap="round" stroke-linejoin="round"/><path d="M894.8 327L931.7 309.5" fill="none" stroke="#1e1b48" stroke-width="9.2" stroke-linecap="round" stroke-linejoin="round"/><path d="M930 325.5L943 282L950.6 323L962 279.4" fill="none" stroke="#1e1b48" stroke-width="9.774999999999999" stroke-linecap="round" stroke-linejoin="round"/><path d="M989 278C975 282 963 300 962 320C962 332 972 333 991.6 319" fill="none" stroke="#1e1b48" stroke-width="10.35" stroke-linecap="round" stroke-linejoin="round"/><path d="M1001.8 287C998 300 996 315 999 320C1003 324 1010 320 1018 310" fill="none" stroke="#1e1b48" stroke-width="9.774999999999999" stroke-linecap="round" stroke-linejoin="round"/><path d="M1048 262.8C1035 295 1015 335 1007 369" fill="none" stroke="#1e1b48" stroke-width="11.5" stroke-linecap="round" stroke-linejoin="round"/>
<text x="696" y="568" font-family="Liberation Sans" font-weight="bold" font-size="48.5" fill="#8079ef" stroke="#8079ef" stroke-width="2.2" textLength="204" lengthAdjust="spacingAndGlyphs">OUR SERVICES:</text>
<circle cx="698" cy="602.5" r="2.7" fill="#1e1b48"/>
<text x="709" y="608.0" font-family="Liberation Sans" font-size="19" fill="#1e1b48" textLength="191" lengthAdjust="spacingAndGlyphs">Logo &amp; Brand Identity</text>
<circle cx="698" cy="628.95" r="2.7" fill="#1e1b48"/>
<text x="709" y="634.45" font-family="Liberation Sans" font-size="19" fill="#1e1b48" textLength="176" lengthAdjust="spacingAndGlyphs">Marketing Materials</text>
<circle cx="698" cy="655.4" r="2.7" fill="#1e1b48"/>
<text x="709" y="660.9" font-family="Liberation Sans" font-size="19" fill="#1e1b48" textLength="177" lengthAdjust="spacingAndGlyphs">Social Media Design</text>
<circle cx="698" cy="681.85" r="2.7" fill="#1e1b48"/>
<text x="709" y="687.35" font-family="Liberation Sans" font-size="19" fill="#1e1b48" textLength="156" lengthAdjust="spacingAndGlyphs">Packaging Design</text>
<circle cx="698" cy="708.3" r="2.7" fill="#1e1b48"/>
<text x="709" y="713.8" font-family="Liberation Sans" font-size="19" fill="#1e1b48" textLength="178" lengthAdjust="spacingAndGlyphs">Presentation Design</text>
<path d="M651 761.5H1000a23 23 0 0 1 23 23V797a23 23 0 0 1-23 23H651Z" fill="#4ad3b5"/>
<circle cx="711" cy="791" r="18.5" fill="#1e1b48"/>
<path d="M704 783.5c1-1.2 2.3-1.2 3 0l1.6 2.6c.5.9.2 1.8-.6 2.4l-.8.6c.7 2 2.2 3.8 4.3 5l.7-.8c.7-.7 1.6-.9 2.4-.3l2.5 1.8c1.1.8 1 2-.2 3-1.6 1.3-3.5 1.6-5.6.5-4.3-2.3-7.5-6-8.7-10.3-.5-1.8 0-3.3 1.4-4.5z" fill="none" stroke="#fff" stroke-width="1.6"/>
<text x="745" y="803.5" font-family="Liberation Sans" font-weight="bold" font-size="36" fill="#1e1b48" stroke="#1e1b48" stroke-width="1.2" textLength="152" lengthAdjust="spacingAndGlyphs">+123-456-7890</text>
<path d="M933 468.5H1118" stroke="#1e1b48" stroke-width="1.6"/>
<path d="M1118 468.5C1040 462 958 490 954 579" fill="none" stroke="#1e1b48" stroke-width="1.8"/>
<circle cx="933" cy="468.5" r="4.3" fill="#1e1b48"/>
<rect x="1113" y="463" width="11" height="11" fill="#1e1b48"/>
<rect x="950" y="574.5" width="9" height="9" fill="#1e1b48"/>
<path d="M1008.6 537.5v13M1002 544h13" stroke="#1e1b48" stroke-width="1.5"/>
<circle cx="1054" cy="505" r="13.5" fill="#f0b21a"/>
<circle cx="1066.3" cy="505" r="12.5" fill="none" stroke="#1e1b48" stroke-width="1.6"/>
<circle cx="1056" cy="523" r="5" fill="#f7e3a8" opacity=".6"/>
<rect x="1148.5" y="446" width="53" height="52" fill="none" stroke="#1e1b48" stroke-width="1.7"/>
<path d="M1161 455L1192 470.5L1176 473.5L1170 490Z" fill="#f5f0e1"/>
<rect x="916.5" y="593" width="46.5" height="57.5" fill="none" stroke="#1e1b48" stroke-width="1.7"/>
<path d="M940 599L951 620L946 638H934L929 620Z" fill="#f5f0e1"/><rect x="933" y="641" width="14" height="4" fill="#f5f0e1"/><path d="M940 606V626" stroke="#e5a93a" stroke-width="1"/><circle cx="940" cy="627" r="1.8" fill="#e5a93a"/>
<path d="M1197 510C1181 517 1177 531 1190 546C1204 561 1201 576 1193 587C1188 594 1186 602 1187 610" fill="none" stroke="#4ad3b5" stroke-width="15" stroke-linecap="butt"/>
<rect x="1141" y="630" width="12" height="13" fill="#f7edc8"/>
<rect x="1146" y="634" width="15" height="15" fill="none" stroke="#1e1b48" stroke-width="1.4"/>
<path d="M1146 695L1165 727H1128Z" fill="#f7e6a6" opacity=".85"/>
<path d="M1129 517C1126 506 1126 495 1130 487L1134 472C1136 467 1141 467 1141 472L1141 483C1145 489 1147 500 1145.5 509L1176 559C1179 570 1172 578 1160 582L1140 548Z" fill="#f7c4b0"/>
<path d="M1064 607.6L1094 575.6L1140.5 558.4L1157.8 585.5L1135.6 597.8C1140 620 1140 660 1135.6 681.4L1118 693L1060 650Z" fill="#f2b61c"/>
<path d="M1075 620C1095 630 1120 650 1128 690L1118 693L1080 660Z" fill="#d99d14" opacity=".35"/>
<path d="M1068 606C1085 600 1100 610 1112 630C1122 650 1128 670 1125 688L1100 690Z" fill="#c98f10" opacity=".28"/>
<path d="M1079 572L1096 568L1098 584L1082 590Z" fill="#f7c4b0"/>
<path d="M1068 546C1075 538 1092 538 1097 548C1100 558 1097 572 1088 576C1078 580 1068 576 1066 566Z" fill="#f7c4b0"/>
<path d="M1058 540C1066 533 1082 532 1090 536C1092 540 1090 546 1084 546C1076 546 1072 552 1072 560L1074 566C1070 566 1068 570 1072 576C1074 580 1078 582 1078 583C1068 584 1058 575 1054 562C1052 552 1053 545 1058 540Z" fill="#1e1b48"/>
<circle cx="1070" cy="572" r="3.5" fill="#f7c4b0"/>
<path d="M1080 566C1085 570 1090 569 1094 564" fill="none" stroke="#fff" stroke-width="2.2"/>
<circle cx="1076" cy="555" r="1.3" fill="#1e1b48"/><circle cx="1087" cy="551" r="1.3" fill="#1e1b48"/>
<path d="M988 649C1010 645 1040 655 1070 675L1123 690C1120 705 1100 712 1070 708L1057 737L1041 742L1001 708C975 700 956 690 955 672C955 658 970 651 988 649Z" fill="#4ad3b5"/>
<path d="M951 605C960 603 972 600 980 597C990 594 1000 596 1006 604L1006 622C1000 628 990 630 982 625L976 614C968 612 958 610 951 608Z" fill="#f7c4b0"/>
<path d="M1017 586.7C1035 588 1050 595 1062.5 604C1085 620 1100 632 1105 644C1115 660 1124 672 1123.8 681C1122 695 1113 700 1100 705C1085 709 1067.8 707.8 1055 705C1045 702 1038.5 697 1038.5 695L984 670.5C990 640 1005 600 1017 586.7Z" fill="#4ad3b5"/>
<path d="M1040 600C1030 630 1025 660 1035 690" fill="none" stroke="#1e1b48" stroke-width="1"/>
<path d="M1070 650C1080 670 1095 690 1110 700" fill="#2aa58e" stroke="none" opacity=".3"/>
<path d="M1060 690C1080 695 1105 690 1122 676C1122 694 1110 705 1090 708C1075 709 1062 706 1050 702Z" fill="#1f8f7c" opacity=".35"/>
<path d="M1004 686.5L1033 694L1030 735L1000 738Z" fill="#f7c4b0"/>
<path d="M1041 728L1068 722L1076 750L1050 758Z" fill="#f7c4b0"/>
<path d="M948 787.7L993 729L1014.6 731.8L1030.5 729L1041 745L1038.5 766.4L956 801Z" fill="#f5f0e1"/>
<path d="M950 790L1038 764M990 740L1005 750M985 745L1000 756M980 752L995 762" fill="none" stroke="#1e1b48" stroke-width="1"/>
<path d="M1038 741L1020 758L1026 760L1004 770" fill="none" stroke="#e9b21c" stroke-width="4"/>
<path d="M1049 753L1078.5 734.5L1094.5 745L1091.8 787.7L1062.5 825L1049 819.7Z" fill="#f5f0e1"/>
<path d="M1050 818L1090 786M1058 760L1070 770M1055 768L1068 778" fill="none" stroke="#1e1b48" stroke-width="1"/>
<path d="M1084 740L1077 765L1083 768L1075 790" fill="none" stroke="#e9b21c" stroke-width="4"/>
</g>
</svg>
<!-- selection overlay -->
<div class="a" style="left:769.5px;top:254.5px;width:337px;height:107.5px;border:2px solid #8b3dff"></div>
<div class="a" style="left:762px;top:247px;width:16px;height:16px;border-radius:50%;background:#fff;box-shadow:0 0 0 1px rgba(0,0,0,.18),0 1px 2px rgba(0,0,0,.2)"></div>
<div class="a" style="left:1097px;top:247px;width:16px;height:16px;border-radius:50%;background:#fff;box-shadow:0 0 0 1px rgba(0,0,0,.18),0 1px 2px rgba(0,0,0,.2)"></div>
<div class="a" style="left:762px;top:353px;width:16px;height:16px;border-radius:50%;background:#fff;box-shadow:0 0 0 1px rgba(0,0,0,.18),0 1px 2px rgba(0,0,0,.2)"></div>
<div class="a" style="left:1097px;top:353px;width:16px;height:16px;border-radius:50%;background:#fff;box-shadow:0 0 0 1px rgba(0,0,0,.18),0 1px 2px rgba(0,0,0,.2)"></div>
<div class="a" style="left:766px;top:297px;width:8px;height:24px;border-radius:4px;background:#fff;box-shadow:0 0 0 1px rgba(0,0,0,.18),0 1px 2px rgba(0,0,0,.2)"></div>
<div class="a" style="left:1101px;top:297px;width:8px;height:24px;border-radius:4px;background:#fff;box-shadow:0 0 0 1px rgba(0,0,0,.18),0 1px 2px rgba(0,0,0,.2)"></div>
<div class="a" style="left:926px;top:393px;width:22px;height:22px;border-radius:50%;background:#fff;box-shadow:0 0 0 1px rgba(0,0,0,.12),0 1px 3px rgba(0,0,0,.2)"></div>
<svg class="a" style="left:930px;top:397px" width="14" height="14" viewBox="0 0 14 14"><path d="M3 5.5A4.5 4.5 0 0 1 11 4.5M11 8.5A4.5 4.5 0 0 1 3 9.5" fill="none" stroke="#0e1318" stroke-width="1.3" stroke-linecap="round"/><path d="M11.5 2v3H8.5M2.5 12V9h3" fill="none" stroke="#0e1318" stroke-width="1.3" stroke-linecap="round" stroke-linejoin="round"/></svg>
<!-- ask canva pill -->
<div class="a" style="left:792px;top:199px;width:292px;height:33px;border-radius:17px;background:#fff;box-shadow:0 2px 6px rgba(30,20,80,.18),0 0 0 1px rgba(0,0,0,.04)"></div>
<svg class="a" style="left:800px;top:206px" width="19" height="19" viewBox="0 0 19 19"><defs><radialGradient id="ac" cx="35%" cy="35%" r="70%"><stop offset="0" stop-color="#5fe3f5"/><stop offset=".6" stop-color="#2a9cf0"/><stop offset="1" stop-color="#4a4cf0"/></radialGradient></defs><circle cx="9.5" cy="9.5" r="9" fill="url(#ac)"/><path d="M12.5 6.3A4.3 4.3 0 1 0 13 12" fill="none" stroke="#fff" stroke-width="1.8" stroke-linecap="round"/><circle cx="5" cy="5.5" r="1.2" fill="#fff"/><circle cx="4" cy="8.5" r=".8" fill="#fff"/></svg>
<div class="t" style="left:824.5px;top:208px;font-size:14px;font-weight:bold;color:#0e1318;letter-spacing:-0.6px">Ask Canva</div>
<svg class="a" style="left:903px;top:204px" width="22" height="22" viewBox="0 0 22 22"><path d="M16 4.5a1.8 1.8 0 0 1 2.5 2.5L9 16.5 5.5 17.5l1-3.5z" fill="none" stroke="#3a5be0" stroke-width="1.5" stroke-linejoin="round"/><path d="M6 2.5l.6 1.5 1.5.6-1.5.6L6 6.7l-.6-1.5-1.5-.6 1.5-.6z" fill="#2ba4d8"/><circle cx="3.5" cy="8" r=".9" fill="#2ba4d8"/></svg>
<svg class="a" style="left:933px;top:204px" width="22" height="22" viewBox="0 0 22 22"><path d="M11 5.5c-4.2 0-7 2.5-7 5.8 0 2.3 1.4 4.2 3.6 5.1L7.4 19l3.3-2.2h.3c4.2 0 7-2.5 7-5.8" fill="none" stroke="#0e1318" stroke-width="1.6" stroke-linecap="round" stroke-linejoin="round"/><path d="M17 2.5v6M14 5.5h6" stroke="#0e1318" stroke-width="1.6" stroke-linecap="round"/></svg>
<svg class="a" style="left:964px;top:204px" width="22" height="22" viewBox="0 0 22 22"><rect x="4.5" y="10" width="13" height="9.5" rx="1.8" fill="none" stroke="#0e1318" stroke-width="1.6"/><path d="M7.5 10V7a3.5 3.5 0 0 1 7-.5" fill="none" stroke="#0e1318" stroke-width="1.6" stroke-linecap="round"/><circle cx="11" cy="13.8" r="1.3" fill="#0e1318"/><path d="M11 14v2.5" stroke="#0e1318" stroke-width="1.5"/></svg>
<svg class="a" style="left:995px;top:204px" width="22" height="22" viewBox="0 0 22 22"><path d="M14.5 4.5V4a1.5 1.5 0 0 0-1.5-1.5H5A1.5 1.5 0 0 0 3.5 4v8A1.5 1.5 0 0 0 5 13.5h.8" fill="none" stroke="#0e1318" stroke-width="1.6" stroke-linecap="round"/><rect x="7.5" y="7" width="11.5" height="12" rx="1.8" fill="none" stroke="#0e1318" stroke-width="1.6"/><path d="M13.2 10v6M10.2 13h6" stroke="#0e1318" stroke-width="1.6" stroke-linecap="round"/></svg>
<svg class="a" style="left:1025px;top:204px" width="22" height="22" viewBox="0 0 22 22"><path d="M3.5 6h15M8.5 6V3.8h5V6M5.5 6l.8 12.2a1.5 1.5 0 0 0 1.5 1.3h6.4a1.5 1.5 0 0 0 1.5-1.3L16.5 6M9.5 9.5v6.5M12.5 9.5v6.5" fill="none" stroke="#0e1318" stroke-width="1.6" stroke-linecap="round" stroke-linejoin="round"/></svg>
<svg class="a" style="left:1056px;top:204px" width="22" height="22" viewBox="0 0 22 22"><circle cx="4.5" cy="11" r="1.9" fill="#0e1318"/><circle cx="11" cy="11" r="1.9" fill="#0e1318"/><circle cx="17.5" cy="11" r="1.9" fill="#0e1318"/></svg>
<!-- toolbar -->
<div class="a" style="left:490px;top:61px;width:897px;height:38px;border-radius:12px;background:#fff;box-shadow:0 0 0 1px rgba(57,76,96,.12),0 2px 4px rgba(57,76,96,.15)"></div>
<div class="a" style="left:493.5px;top:65px;width:136px;height:30.5px;border-radius:8px;border:1px solid #dcdde2"></div>
<div class="t" style="left:500.5px;top:73.3px;font-size:14.8px;color:#0e1318">Lost in south</div>
<div class="a" style="left:634.5px;top:65px;width:102.5px;height:30.5px;border-radius:8px;border:1px solid #dcdde2"></div>
<div class="a" style="left:646px;top:80px;width:8px;height:1.5px;background:#0e1318"></div>
<div class="t" style="left:674px;top:73.8px;font-size:14px;color:#0e1318">125</div>
<svg class="a" style="left:716px;top:75px" width="10" height="10" viewBox="0 0 10 10"><path d="M5 .8v8.4M.8 5h8.4" stroke="#0e1318" stroke-width="1.5"/></svg>
<svg class="a" style="left:745px;top:69px" width="22" height="23" viewBox="0 0 22 23"><path d="M4.5 14.2L11 1.8l6.5 12.4M7 9.6h8" fill="none" stroke="#0e1318" stroke-width="1.6" stroke-linejoin="round"/><rect x="1" y="17.2" width="20" height="4.6" rx="2.3" fill="#1e1b48"/></svg>
<div class="t" style="left:785px;top:74px;font-size:15.5px;font-weight:bold;color:#a7aab1">B</div>
<svg class="a" style="left:818px;top:73px" width="14" height="15" viewBox="0 0 14 15"><path d="M5.5 1.2h7M1.5 13.8h7M9 1.2L5 13.8" stroke="#a7aab1" stroke-width="1.4"/></svg>
<svg class="a" style="left:852px;top:72px" width="15" height="19" viewBox="0 0 15 19"><path d="M2.5 1.5v7.5a5 5 0 0 0 10 0V1.5M1.5 17.5h12" fill="none" stroke="#0e1318" stroke-width="1.6" stroke-linecap="round"/></svg>
<svg class="a" style="left:888px;top:72px" width="14" height="18" viewBox="0 0 14 18"><path d="M11 3.5C10 2 8.7 1.5 7 1.5 4.5 1.5 2.8 3 2.8 5c0 2 1.6 3 4.2 3.5 2.8.6 4.3 1.8 4.3 4 0 2.2-1.8 4-4.4 4-1.8 0-3.3-.7-4.4-2.3M.5 9h13" fill="none" stroke="#0e1318" stroke-width="1.5" stroke-linecap="round"/></svg>
<div class="t" style="left:918.5px;top:74px;font-size:17px;color:#0e1318;letter-spacing:-0.3px">aA</div>
<svg class="a" style="left:953px;top:72px" width="20" height="18" viewBox="0 0 20 18"><path d="M1.5 2h17M4.5 7h11M1.5 12h17M4.5 16.5h11" stroke="#0e1318" stroke-width="1.6" stroke-linecap="round"/></svg>
<svg class="a" style="left:988px;top:71px" width="19" height="20" viewBox="0 0 19 20"><circle cx="2.8" cy="3" r="2.1" fill="#0e1318"/><circle cx="2.8" cy="10" r="2.1" fill="#0e1318"/><circle cx="2.8" cy="17" r="2.1" fill="#0e1318"/><path d="M7.5 3h10M7.5 10h10M7.5 17h10" stroke="#0e1318" stroke-width="1.6" stroke-linecap="round"/></svg>
<svg class="a" style="left:1022px;top:71px" width="20" height="20" viewBox="0 0 20 20"><path d="M4.5 3.8V1.5h11v2.3M10 1.5v10.5M7.8 12h4.4M1.5 16.5h17M4.5 13.5l-3 3 3 3M15.5 13.5l3 3-3 3" fill="none" stroke="#0e1318" stroke-width="1.5" stroke-linecap="round" stroke-linejoin="round"/></svg>
<div class="a" style="left:1054px;top:73.5px;width:1.2px;height:14px;background:#d5d6db"></div>
<svg class="a" style="left:1067px;top:71px" width="20" height="19" viewBox="0 0 20 19"><g fill="#0e1318"><rect x="1" y="1" width="4.2" height="4.2" rx="2"/><rect x="1" y="9" width="4.2" height="4.2" rx="2"/><rect x="5" y="5" width="4.2" height="4.2" rx="2"/><rect x="5" y="13" width="4.2" height="4.2" rx="2"/><rect x="1" y="14.5" width="4.2" height="4.2" rx="2"/></g><g fill="#767982"><rect x="9" y="1" width="4.2" height="4.2" rx="2"/><rect x="9" y="9" width="4.2" height="4.2" rx="2"/><rect x="13" y="5" width="4.2" height="4.2" rx="2"/><rect x="9" y="14.5" width="4.2" height="4.2" rx="2"/></g><g fill="#c9cbd0"><rect x="15" y="1" width="4.2" height="4.2" rx="2"/><rect x="15" y="9" width="4.2" height="4.2" rx="2"/><rect x="15" y="14.5" width="4.2" height="4.2" rx="2"/></g></svg>
<div class="a" style="left:1100px;top:73.5px;width:1.2px;height:14px;background:#d5d6db"></div>
<div class="a" style="left:1108px;top:66px;width:60px;height:29.5px;border-radius:6px;background:#efe7fc"></div>
<div class="t" style="left:1116px;top:73.8px;font-size:14px;font-weight:bold;color:#6b2fd6;letter-spacing:-0.2px">Effects</div>
<div class="a" style="left:1176px;top:73.5px;width:1.2px;height:14px;background:#d5d6db"></div>
<div class="t" style="left:1192px;top:73.8px;font-size:14px;font-weight:bold;color:#0e1318;letter-spacing:-0.2px">Animate</div>
<div class="a" style="left:1261px;top:73.5px;width:1.2px;height:14px;background:#d5d6db"></div>
<div class="t" style="left:1277px;top:73.8px;font-size:14px;font-weight:bold;color:#0e1318;letter-spacing:-0.3px">Position</div>
<div class="a" style="left:1344.5px;top:73.5px;width:1.2px;height:14px;background:#d5d6db"></div>
<svg class="a" style="left:1358px;top:70px" width="20" height="21" viewBox="0 0 20 21"><path d="M3.5 2h12a1.5 1.5 0 0 1 1.5 1.5v3A1.5 1.5 0 0 1 15.5 8h-12A1.5 1.5 0 0 1 2 6.5v-3A1.5 1.5 0 0 1 3.5 2zM17 5h1.3v5.5H10v3" fill="none" stroke="#0e1318" stroke-width="1.6" stroke-linejoin="round"/><rect x="8.3" y="13.2" width="3.4" height="6.3" rx="1.2" fill="none" stroke="#0e1318" stroke-width="1.6"/></svg>
<!-- page actions -->
<svg class="a" style="left:1134px;top:119px" width="16" height="19" viewBox="0 0 16 19"><rect x="2.5" y="8" width="11.5" height="9.5" rx="1.5" fill="none" stroke="#3c3f47" stroke-width="1.5"/><path d="M5 8V5.2a3.3 3.3 0 0 1 6.5-.8" fill="none" stroke="#3c3f47" stroke-width="1.5" stroke-linecap="round"/><circle cx="8.2" cy="11.8" r="1.1" fill="#3c3f47"/><path d="M8.2 12v2.6" stroke="#3c3f47" stroke-width="1.3"/></svg>
<svg class="a" style="left:1168px;top:121px" width="17" height="17" viewBox="0 0 17 17"><path d="M10.5 2.8V2.5A1.5 1.5 0 0 0 9 1H3A1.8 1.8 0 0 0 1.2 2.8v6.7A1.5 1.5 0 0 0 2.7 11" fill="none" stroke="#3c3f47" stroke-width="1.5" stroke-linecap="round"/><rect x="5.5" y="4.5" width="9.5" height="11" rx="1.6" fill="none" stroke="#3c3f47" stroke-width="1.5"/><path d="M10.2 7.5v5M7.7 10h5" stroke="#3c3f47" stroke-width="1.5"/></svg>
<svg class="a" style="left:1203px;top:120px" width="17" height="17" viewBox="0 0 17 17"><path d="M5 4.3H3.3a1.5 1.5 0 0 0-1.5 1.5v8.5a1.5 1.5 0 0 0 1.5 1.5h8.5a1.5 1.5 0 0 0 1.5-1.5V12.5" fill="none" stroke="#3c3f47" stroke-width="1.5" stroke-linecap="round"/><path d="M10.5 1.2v8M6.5 5.2h8" stroke="#3c3f47" stroke-width="1.5" stroke-linecap="round"/></svg>
<!-- add page -->
<div class="a" style="left:651px;top:886.5px;width:573px;height:35.5px;border-radius:7px;border:1px solid #8f9199;background:#f0eff5"></div>
<div class="a" style="left:1192.5px;top:887px;width:1px;height:34.5px;background:#8f9199"></div>
<svg class="a" style="left:1202px;top:898px" width="12" height="12" viewBox="0 0 12 12"><path d="M2.5 4.5L6 8l3.5-3.5" fill="none" stroke="#0e1318" stroke-width="1.6" stroke-linecap="round" stroke-linejoin="round"/></svg>
<svg class="a" style="left:884px;top:897px" width="12" height="12" viewBox="0 0 12 12"><path d="M6 1.5v9M1.5 6h9" stroke="#0e1318" stroke-width="1.7"/></svg>
<div class="t" style="left:899px;top:897px;font-size:14px;font-weight:bold;color:#0e1318;letter-spacing:-0.2px">Add page</div>
<!-- bottom bar -->
<svg class="a" style="left:425.5px;top:948px" width="22" height="19" viewBox="0 0 22 19"><path d="M2 3h12M2 7.5h9M2 12h5M2 16.5h3" stroke="#0e1318" stroke-width="1.5" stroke-linecap="round"/><path d="M16.8 4.5a1.6 1.6 0 0 1 2.3 2.3l-7.3 7.3-3 .9.9-3z" fill="none" stroke="#0e1318" stroke-width="1.5" stroke-linejoin="round"/></svg>
<div class="t" style="left:451px;top:950.3px;font-size:14.5px;font-weight:bold;color:#0e1318;letter-spacing:-0.2px">Notes</div>
<svg class="a" style="left:509px;top:947px" width="19" height="20" viewBox="0 0 19 20"><circle cx="9.5" cy="11.3" r="7" fill="none" stroke="#0e1318" stroke-width="1.6"/><path d="M6.5 1.8h6M9.5 2v2.3M9.5 8v3.5l2 1.5" fill="none" stroke="#0e1318" stroke-width="1.6" stroke-linecap="round"/></svg>
<div class="t" style="left:535px;top:950.3px;font-size:14.5px;font-weight:bold;color:#0e1318;letter-spacing:-0.2px">Timer</div>
<div class="a" style="left:1075px;top:955.5px;width:85px;height:3px;border-radius:2px;background:#8d8aa3"></div>
<div class="a" style="left:1159px;top:956px;width:106px;height:2px;border-radius:2px;background:#d3d3d9"></div>
<div class="a" style="left:1150px;top:948px;width:19px;height:19px;border-radius:50%;background:#fff;box-shadow:0 0 0 1px rgba(0,0,0,.08),0 1px 3px rgba(0,0,0,.25)"></div>
<div class="t" style="left:1290px;top:950.3px;font-size:14.5px;font-weight:bold;color:#0e1318;letter-spacing:-0.2px">56%</div>
<div class="a" style="left:1342.5px;top:947.5px;width:1px;height:19px;background:#d3d4d9"></div>
<svg class="a" style="left:1357px;top:947px" width="21" height="21" viewBox="0 0 21 21"><rect x="1.5" y="2" width="17.5" height="10.5" rx="1.5" fill="none" stroke="#0e1318" stroke-width="1.6"/><rect x="1.5" y="14.8" width="4.8" height="4.5" rx="1" fill="none" stroke="#0e1318" stroke-width="1.5"/><rect x="8" y="14.8" width="4.8" height="4.5" rx="1" fill="none" stroke="#0e1318" stroke-width="1.5"/><rect x="14.5" y="14.8" width="4.8" height="4.5" rx="1" fill="none" stroke="#0e1318" stroke-width="1.5"/></svg>
<div class="t" style="left:1383px;top:950.3px;font-size:14.5px;font-weight:bold;color:#0e1318;letter-spacing:-0.7px">Pages</div>
<div class="t" style="left:1443.5px;top:950.3px;font-size:14.5px;font-weight:bold;color:#0e1318">1 / 1</div>
<svg class="a" style="left:1493px;top:947.5px" width="19" height="19" viewBox="0 0 19 19"><rect x="1.5" y="1.5" width="6.5" height="6.5" rx="1.8" fill="none" stroke="#0e1318" stroke-width="1.6"/><rect x="10.5" y="1.5" width="6.5" height="6.5" rx="1.8" fill="none" stroke="#0e1318" stroke-width="1.6"/><rect x="1.5" y="10.5" width="6.5" height="6.5" rx="1.8" fill="none" stroke="#0e1318" stroke-width="1.6"/><rect x="10.5" y="10.5" width="6.5" height="6.5" rx="1.8" fill="none" stroke="#0e1318" stroke-width="1.6"/></svg>
<svg class="a" style="left:1531px;top:947.5px" width="19" height="19" viewBox="0 0 19 19"><path d="M11 2h6v6M17 2l-6 6M8 17H2v-6M2 17l6-6" fill="none" stroke="#0e1318" stroke-width="1.6" stroke-linecap="round" stroke-linejoin="round"/></svg>
<svg class="a" style="left:1567px;top:946px" width="22" height="22" viewBox="0 0 22 22"><circle cx="11" cy="11" r="9.6" fill="none" stroke="#0e1318" stroke-width="1.6"/><path d="M8.3 8.5a2.8 2.8 0 0 1 5.4.8c0 1.8-2.7 2.2-2.7 4" fill="none" stroke="#0e1318" stroke-width="1.6" stroke-linecap="round"/><circle cx="11" cy="15.8" r="1.1" fill="#0e1318"/></svg>
</body></html>
